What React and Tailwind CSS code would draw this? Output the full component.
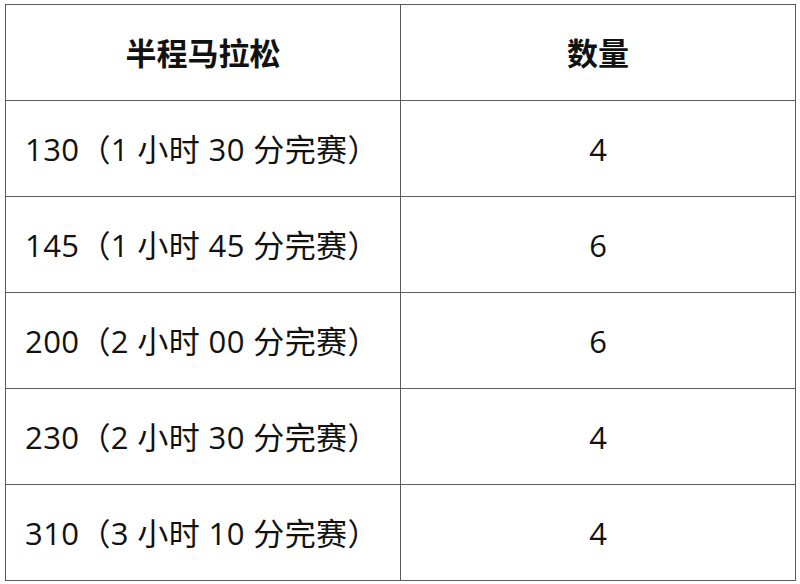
const rows = [
  ['130（1 小时 30 分完赛）', '4'],
  ['145（1 小时 45 分完赛）', '6'],
  ['200（2 小时 00 分完赛）', '6'],
  ['230（2 小时 30 分完赛）', '4'],
  ['310（3 小时 10 分完赛）', '4'],
];

export default function App() {
  return (
    <div
      className="w-[800px] h-[584px] bg-white pt-[4px] pl-[5px] text-[#111]"
      style={{ fontFamily: '"Open Sans", "Noto Sans CJK SC", sans-serif' }}
    >
      <table className="border-collapse w-[791px]">
        <thead>
          <tr className="h-[96px]">
            <th className="w-[395px] border-[1.5px] border-[#5c5c5c] text-[31px] font-bold text-center pt-[2px]">半程马拉松</th>
            <th className="border-[1.5px] border-[#5c5c5c] text-[31px] font-bold text-center pt-[2px]">数量</th>
          </tr>
        </thead>
        <tbody>
          {rows.map(([label, qty]) => (
            <tr key={label} className="h-[96px]">
              <td className="border-[1.5px] border-[#5c5c5c] pl-[19px] pt-[2px] text-[31px] tracking-[0.4px] whitespace-nowrap">{label}</td>
              <td className="border-[1.5px] border-[#5c5c5c] pt-[2px] text-[31px] text-center">{qty}</td>
            </tr>
          ))}
        </tbody>
      </table>
    </div>
  );
}
